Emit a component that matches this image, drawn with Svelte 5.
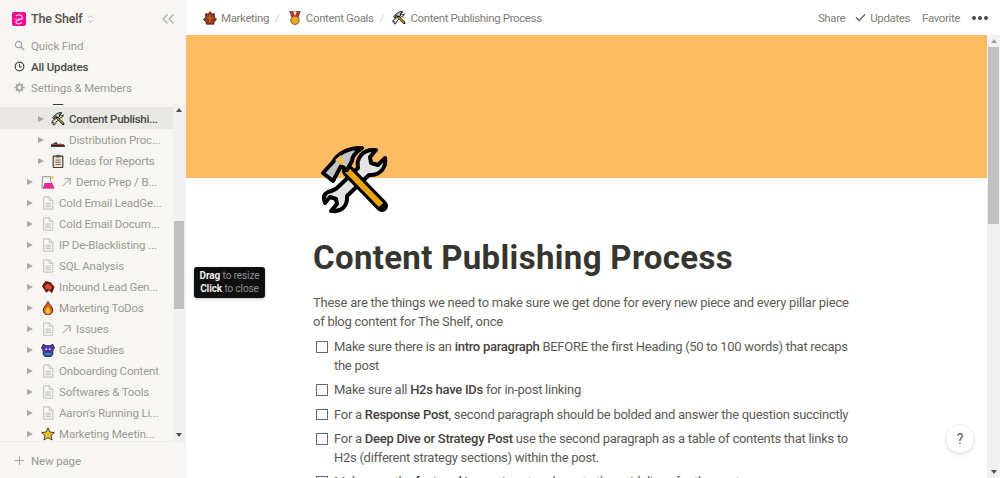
<script>
  const rows = [
    { level: 2, icon: 'clip', label: '' , clip: true},
    { level: 2, icon: 'tools', label: 'Content Publishi...', active: true },
    { level: 2, icon: 'shoes', label: 'Distribution Proc...' },
    { level: 2, icon: 'clip', label: 'Ideas for Reports' },
    { level: 1, icon: 'flask', link: true, label: 'Demo Prep / B...' },
    { level: 1, icon: 'doc', label: 'Cold Email LeadGe...' },
    { level: 1, icon: 'doc', label: 'Cold Email Docum...' },
    { level: 1, icon: 'doc', label: 'IP De-Blacklisting ...' },
    { level: 1, icon: 'doc', label: 'SQL Analysis' },
    { level: 1, icon: 'lead', label: 'Inbound Lead Gen...' },
    { level: 1, icon: 'fire', label: 'Marketing ToDos' },
    { level: 1, icon: 'doc', link: true, label: 'Issues' },
    { level: 1, icon: 'case', label: 'Case Studies' },
    { level: 1, icon: 'doc', label: 'Onboarding Content' },
    { level: 1, icon: 'doc', label: 'Softwares & Tools' },
    { level: 1, icon: 'doc', label: "Aaron's Running Li..." },
    { level: 1, icon: 'star', label: 'Marketing Meetin...' }
  ];
</script>

{#snippet emoji(name)}
  <svg class="ico" viewBox="0 0 16 16" aria-hidden="true">
    {#if name === 'doc'}
      <path d="M3 1h6.500L13.500 5v10H3z" fill="#f7f6f3" stroke="#bdbcb8" stroke-width="1.100"/>
      <path d="M9.500 1V5H13.500M5 8h6.500M5 10h6.500M5 12h6.500" fill="none" stroke="#bdbcb8" stroke-width="1"/>
    {:else if name === 'shoes'}
      <path d="M0 15v-2l3-1 3-2 2 3h1l1-1 5 1v2z" fill="#3a2a20"/>
      <path d="M1 13h6M10 13.500h4" stroke="#c8402c" stroke-width="1.600"/>
      <path d="M0 15h16" stroke="#111" stroke-width="1.400"/>
    {:else if name === 'clip'}
      <rect x="2.500" y="2.500" width="11" height="13" rx="1" fill="#f2e3c8" stroke="#3a3a3a" stroke-width="1.300"/>
      <rect x="5.500" y="1" width="5" height="3" fill="#555"/>
      <path d="M5 7h6M5 9.500h6M5 12h6" stroke="#555" stroke-width="1"/>
    {:else if name === 'flask'}
      <path d="M2 2h9v5l4 8H1z" fill="#f4f4f4" stroke="#555" stroke-width=".7"/>
      <path d="M4 9h9l2 6.500H2z" fill="#ec2c96"/>
      <circle cx="13" cy="2.500" r="1.500" fill="#f3c93e"/>
    {:else if name === 'lead'}
      <path d="M1 7l4-6 6 1.500 4.500 5.500-3 7-3.500-3-3 2.500-2.500-4z" fill="#5c1d10"/>
      <path d="M4 7l4-3 5 4-3 4-2-2-2 1z" fill="#e0492c"/>
    {:else if name === 'fire'}
      <path d="M8 .5c1 3 5.500 5.500 5.500 10a5.500 5.500 0 0 1-11 0C2.500 7 6 4.500 8 .5z" fill="#e4581a" stroke="#222" stroke-width=".9"/>
      <path d="M8 6c1 2.500 3 3.500 3 5.500a3 3 0 0 1-6 0C5 9.500 7 8.500 8 6z" fill="#fbc43a"/>
    {:else if name === 'case'}
      <path d="M2.500 1.500l3.500 1.500h4l3.500-1.500L15.500 6l-2 2v5l-2 2.500h-7l-2-2.500V8l-2-2z" fill="#4b38a8" stroke="#1b1638" stroke-width=".9"/>
      <circle cx="6" cy="7" r="1.100" fill="#d8d4ff"/><circle cx="10" cy="7" r="1.100" fill="#d8d4ff"/>
      <path d="M4 12.500h8" stroke="#1aa0a0" stroke-width="2"/>
    {:else if name === 'star'}
      <path d="M8 1l2.200 4.800 5 .6-3.700 3.400 1 5L8 12.300 3.500 14.800l1-5L.8 6.400l5-.6z" fill="#f6bd2f" stroke="#3a3020" stroke-width="1"/>
    {:else if name === 'maple'}
      <path d="M8 .5l2 3 3-.5v4l2.500 2.500-3 3.500v2H3.500v-2L.5 9.500 3 7V3l3 .5z" fill="#8f3c1c" stroke="#2c1408" stroke-width=".8"/>
      <path d="M8 4v9M5 8h6" stroke="#d86a2a" stroke-width="1.300"/>
    {:else if name === 'medal'}
      <path d="M2 .5h12l-3 8H5z" fill="#cf2f2a" stroke="#333" stroke-width=".8"/>
      <path d="M6 .5h4L8 6z" fill="#f5f1e6"/>
      <circle cx="8" cy="10.500" r="4.800" fill="#eda922" stroke="#5a3b10" stroke-width=".9"/>
    {:else if name === 'tools'}
      <path d="M2.300 10.300c1-.3 1.600-.3 2.100-.8L8.800 5.700C8.400 3.800 9.500 2.300 12 2.300l-1.300 1.400.4 1.400 1.500.4 1.300-1.400c.4 2-1.200 3.700-3 3.500l-5.200 5c.2 2-1.500 3.400-3.500 3.100l1.300-1.500-.4-1.100-1.500-.4L1.300 14c-.3-1.500 0-3 1-3.700z" fill="#e4e4e4" stroke="#111" stroke-width="1" stroke-linejoin="round" transform="translate(0 -1)"/>
      <path d="M6.500 6l7.500 7.500" stroke="#111" stroke-width="2.800" stroke-linecap="round"/>
      <path d="M7 6.500l6.800 6.800" stroke="#eba40b" stroke-width="1.300"/>
      <path d="M1.800 6.400 6 2.400C7.800.900 10 .800 12 .800L10 2.800l-.5 3L8 6.500 5 5 3.700 8z" fill="#bdbdbd" stroke="#111" stroke-width="1.100" stroke-linejoin="round"/>
    {/if}
  </svg>
{/snippet}

{#snippet link()}
  <svg class="link" viewBox="0 0 12 12" aria-hidden="true"><path d="M2 11 10.500 2.500M4 2h7v7" fill="none" stroke="#8b8a86" stroke-width="1"/></svg>
{/snippet}

<div class="app">
  <aside class="side">
    <div class="space">
      <span class="logo"><svg viewBox="0 0 14 14" aria-hidden="true"><path d="M4 4c3-2 7-1 6 2S4 7 4 10s5 2 6 0" fill="none" stroke="#ffc0e2" stroke-width="1.300"/><path d="M2.500 7h9" stroke="#ffc0e2" stroke-width=".8"/></svg></span>
      <span class="space-name">The Shelf</span>
      <svg class="updown" viewBox="0 0 8 12" aria-hidden="true"><path d="M1.500 4.500 4 2l2.500 2.500M1.500 7.500 4 10l2.500-2.500" fill="none" stroke="#a8a7a3" stroke-width="1"/></svg>
      <svg class="collapse" viewBox="0 0 12 10" aria-hidden="true"><path d="M5.500 .5 1 5l4.500 4.500M11.500 .5 7 5l4.500 4.500" fill="none" stroke="#b0afab" stroke-width="1.300"/></svg>
    </div>
    <nav class="menu">
      <div class="menu-row">
        <svg viewBox="0 0 14 14" aria-hidden="true"><circle cx="5.800" cy="5.800" r="4" fill="none" stroke="#a5a4a0" stroke-width="1.600"/><path d="M8.800 8.800 13 13" stroke="#a5a4a0" stroke-width="1.800"/></svg>
        Quick Find
      </div>
      <div class="menu-row on">
        <svg viewBox="0 0 14 14" aria-hidden="true"><circle cx="7" cy="7" r="5.500" fill="none" stroke="#4a4945" stroke-width="1.500"/><path d="M7 3.500V7.500H10" fill="none" stroke="#4a4945" stroke-width="1.300"/></svg>
        All Updates
      </div>
      <div class="menu-row">
        <svg viewBox="0 0 14 14" aria-hidden="true"><circle cx="7" cy="7" r="3.500" fill="none" stroke="#a5a4a0" stroke-width="2"/><path d="M7 .5v3M7 10.500v3M.5 7h3M10.500 7h3M2.400 2.400l2.100 2.100M9.500 9.500l2.100 2.100M2.400 11.600l2.100-2.100M9.500 4.500l2.100-2.100" stroke="#a5a4a0" stroke-width="1.800"/></svg>
        Settings &amp; Members
      </div>
    </nav>
    <div class="tree-wrap">
      <div class="tree">
        {#each rows as r}
          <div class="row" class:active={r.active} class:l2={r.level === 2} class:clip={r.clip}>
            <span class="tri"></span>
            {@render emoji(r.icon)}
            {#if r.link}{@render link()}{/if}
            <span class="label">{r.label}</span>
          </div>
        {/each}
      </div>
      <div class="bar small">
        <span class="up"></span>
        <span class="track"><span class="thumb"></span></span>
        <span class="down"></span>
      </div>
    </div>
    <div class="new">
      <svg viewBox="0 0 12 12" aria-hidden="true"><path d="M6 1v10M1 6h10" stroke="#a5a4a0" stroke-width="1.100"/></svg>
      New page
    </div>
    <div class="tip"><b>Drag</b> to resize<br /><b>Click</b> to close</div>
  </aside>

  <main class="main">
    <header class="top">
      <div class="crumbs">
        {@render emoji('maple')}<span>Marketing</span><i>/</i>
        {@render emoji('medal')}<span>Content Goals</span><i>/</i>
        {@render emoji('tools')}<span>Content Publishing Process</span>
      </div>
      <div class="actions">
        <span>Share</span>
        <span class="upd"><svg viewBox="0 0 12 10" aria-hidden="true"><path d="M1 5l3.500 3.500L11 1.500" fill="none" stroke="#55544f" stroke-width="1.500"/></svg>Updates</span>
        <span>Favorite</span>
        <span class="dots"><b></b><b></b><b></b></span>
      </div>
    </header>
    <div class="body">
      <div class="page">
        <div class="cover"></div>
        <div class="content">
          <svg class="page-icon" viewBox="0 0 120 85" aria-hidden="true">
            <path d="M28 52C32 51 35 50 38 47L58 28C56 18 63 10 73 10L76 10 70 17 71 23 78 25 85 18C87 28 79 36 69 35L47 56C48 66 41 72 33 71L31 71 37 64 36 59 30 57 25 63C23 58 24 54 28 52Z" fill="#e4e4e4" stroke="#000" stroke-width="4" stroke-linejoin="round"/>
            <path d="M48 31 82 66" stroke="#000" stroke-width="12" stroke-linecap="round"/>
            <path d="M47.500 30.500 81 65" stroke="#eba40b" stroke-width="6"/>
            <path d="M23 33 33 22C38 13 50 7 62 8 56 12 52 16 52 21L47 30 41 26 33 41Z" fill="#c4c4c4" stroke="#000" stroke-width="4" stroke-linejoin="round"/>
            <path d="M35 20 41 15 45 24 41 25Z" fill="#f4bd5c"/>
          </svg>
          <h1>Content Publishing Process</h1>
          <p>These are the things we need to make sure we get done for every new piece and every pillar piece of blog content for The Shelf, once</p>
          <ul>
            <li><span class="box"></span><div>Make sure there is an <b>intro paragraph</b> BEFORE the first Heading (50 to 100 words) that recaps the post</div></li>
            <li><span class="box"></span><div>Make sure all <b>H2s have IDs</b> for in-post linking</div></li>
            <li><span class="box"></span><div>For a <b>Response Post</b>, second paragraph should be bolded and answer the question succinctly</div></li>
            <li><span class="box"></span><div>For a <b>Deep Dive or Strategy Post</b> use the second paragraph as a table of contents that links to H2s (different strategy sections) within the post.</div></li>
            <li><span class="box"></span><div>Make sure the <b>featured image</b> is set and meets the guidelines for the post</div></li>
          </ul>
        </div>
        <div class="help">?</div>
      </div>
      <div class="bar big">
        <span class="up"></span>
        <span class="track"><span class="thumb"></span></span>
        <span class="down"></span>
      </div>
    </div>
  </main>
</div>

<style>
  :global(body) { margin: 0; }
  .app {
    display: grid;
    grid-template-columns: 186px 1fr;
    width: 1000px;
    height: 478px;
    overflow: hidden;
    font-family: Roboto, "Noto Sans", sans-serif;
    color: #37352f;
    background: #fff;
  }
  .side {
    position: relative;
    display: flex;
    flex-direction: column;
    background: #f7f6f3;
    border-right: 1px solid #eeede9;
    box-sizing: border-box;
    height: 478px;
    z-index: 2;
  }
  .space { display: flex; align-items: center; height: 35px; padding: 2px 0 0 12px; box-sizing: border-box; }
  .logo { display: flex; width: 14px; height: 14px; border-radius: 2px; background: #f2078f; }
  .logo svg { width: 14px; height: 14px; }
  .space-name { margin-left: 5px; font-size: 12.500px; font-weight: 500; color: #55534e; letter-spacing: -.2px; }
  .updown { width: 7px; height: 10px; margin-left: 5px; }
  .collapse { width: 12px; height: 10px; margin-left: auto; margin-right: 11px; }
  .menu { display: flex; flex-direction: column; }
  .menu-row {
    display: flex; align-items: center; gap: 6px; height: 21px; padding-left: 14px;
    font-size: 11.500px; color: #9b9a96; letter-spacing: -.15px;
  }
  .menu-row svg { width: 11px; height: 11px; }
  .menu-row.on { color: #4a4945; font-weight: 500; }
  .tree-wrap { display: flex; height: 337px; margin-top: 6px; overflow: hidden; flex: none; }
  .tree { flex: 1; min-width: 0; overflow: hidden; }
  .row {
    display: flex; align-items: center; height: 21px; padding: 2px 0 0 27px; box-sizing: border-box;
    font-size: 11.500px; color: #9b9a96; letter-spacing: -.15px;
  }
  .row.l2 { padding-left: 38px; }
  .row.clip { margin-top: -18px; }
  .row.active { background: #e9e8e4; color: #4a4945; font-weight: 500; height: 22px; margin-bottom: -1px; letter-spacing: -.3px; }
  .tri {
    width: 0; height: 0; border-left: 6px solid #a9a8a4;
    border-top: 3.500px solid transparent; border-bottom: 3.500px solid transparent;
    margin-right: 8px;
  }
  .ico { width: 14px; height: 14px; flex: none; margin-right: 4px; }
  .l2 .tri { margin-right: 7px; }
  .link { width: 10px; height: 10px; margin: 0 5px 0 2px; flex: none; }
  .label { white-space: nowrap; }
  .bar {
    display: flex; flex-direction: column; align-items: center; flex: none; background: #f1f1f1;
    box-sizing: border-box;
  }
  .bar .track { flex: 1; width: 100%; display: block; }
  .bar .thumb { display: block; background: #c1c1c1; margin: 0 1px; }
  .bar .up, .bar .down { width: 0; height: 0; border-left: 3.500px solid transparent; border-right: 3.500px solid transparent; flex: none; }
  .bar .up { border-bottom: 4px solid #505050; margin: 4px 0; }
  .bar .down { border-top: 4px solid #505050; margin: 4px 0; }
  .small { width: 12px; }
  .small .thumb { height: 88px; margin-top: 105px; }
  .big { width: 13px; }
  .big .up { border-bottom-color: #a3a3a3; }
  .big .thumb { height: 177px; margin-top: 0; }
  .new {
    display: flex; align-items: center; gap: 6px; height: 37px; padding: 1px 0 0 14px; box-sizing: border-box;
    font-size: 11.500px; color: #9b9a96; border-top: 1px solid #eeede9; letter-spacing: -.15px;
  }
  .new svg { width: 11px; height: 11px; }
  .tip {
    position: absolute; left: 194px; top: 267px; width: 71px; height: 31px; box-sizing: border-box;
    background: #0f0f0f; border-radius: 3px; color: #8f8f8f; font-size: 10px; line-height: 12.500px; letter-spacing: -.1px;
    text-align: center; padding-top: 3px; box-shadow: 0 1px 3px rgba(0,0,0,.25); white-space: nowrap;
  }
  .tip b { color: #ececec; font-weight: 700; }
  .main { display: flex; flex-direction: column; min-width: 0; height: 478px; }
  .top {
    display: flex; align-items: center; justify-content: space-between; height: 35px; flex: none;
    padding: 0 12px 0 17px; font-size: 11.500px; color: #7f7e7a; letter-spacing: -.38px;
  }
  .crumbs { display: flex; align-items: center; }
  .crumbs i { font-style: normal; color: #cfcec9; margin: 0 8.500px 0 6px; }
  .actions { display: flex; align-items: center; gap: 12px; }
  .upd { display: flex; align-items: center; gap: 4px; margin-left: -2px; }
  .upd svg { width: 11px; height: 9px; }
  .dots { display: flex; gap: 2px; }
  .dots b { width: 4px; height: 4px; border-radius: 50%; background: #4a4945; }
  .body { flex: 1; display: flex; min-height: 0; }
  .page { flex: 1; min-width: 0; position: relative; overflow: hidden; }
  .cover { height: 143px; background: #fdbc64; }
  .content { padding-left: 127px; width: 547px; }
  .page-icon { display: block; width: 120px; height: 85px; margin: -38px 0 0 -13px; }
  h1 { margin: 13px 0 0; font-size: 33px; line-height: 40px; font-weight: 700; color: #37352f; white-space: nowrap; letter-spacing: .33px; }
  p { margin: 15px 0 0; font-size: 13px; line-height: 19px; color: #5d5b56; letter-spacing: -.25px; }
  ul { list-style: none; margin: 7px 0 0; padding: 0; font-size: 13px; line-height: 18.500px; color: #5d5b56; letter-spacing: -.27px; }
  li { display: flex; margin-bottom: 6px; padding-left: 3px; }
  li b { font-weight: 500; color: #45433e; }
  .box { width: 9.500px; height: 9.500px; border: 1.500px solid #6a6965; flex: none; margin: 3px 6.500px 0 0; }
  .help {
    position: absolute; right: 13px; top: 390px; width: 28px; height: 28px; border-radius: 50%;
    background: #fff; box-shadow: 0 0 0 1px rgba(15,15,15,.05), 0 2px 4px rgba(15,15,15,.1);
    text-align: center; font-size: 14px; line-height: 28px; color: #55534e;
  }
</style>
